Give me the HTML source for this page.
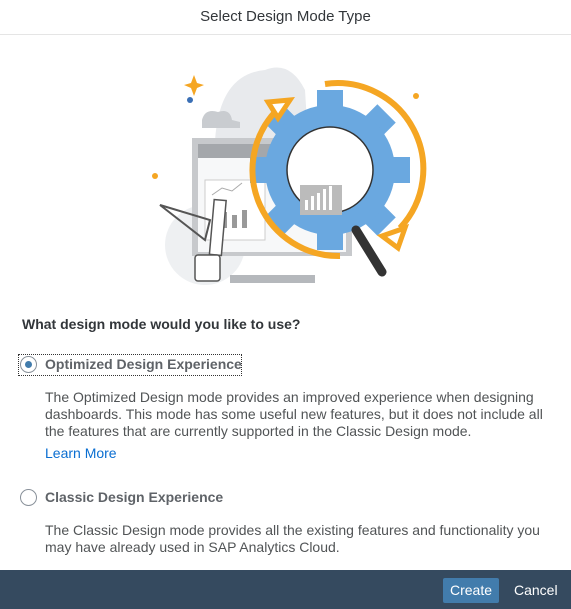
<!DOCTYPE html>
<html><head><style>
body{margin:0;width:571px;height:609px;background:#fff;font-family:"Liberation Sans",sans-serif;position:relative;overflow:hidden;color:#32363a}
.t{position:absolute;white-space:nowrap}
.hdr{position:absolute;left:0;top:0;width:571px;height:34px;border-bottom:1px solid #e5e5e5;text-align:center;line-height:33px;font-size:15px;color:#32363a}
.q{left:22px;top:316px;font-size:14px;font-weight:bold}
.lab{font-size:14px;font-weight:bold;color:#5f6368}
.d{font-size:14px;color:#515456;line-height:17px;white-space:normal;width:510px}
.radio{position:absolute;width:15px;height:15px;border:1px solid #89919a;border-radius:50%;background:#fff}
.foot{position:absolute;left:0;top:570px;width:571px;height:39px;background:#354a5f}
.btn{position:absolute;top:8px;height:25px;line-height:25px;font-size:14px;color:#fff;padding:0 7px}
</style></head><body>
<div class="hdr">Select Design Mode Type</div>
<svg style="position:absolute;left:130px;top:50px" width="310" height="240" viewBox="0 0 310 240">
<path d="M85 120 Q80 25 135 20 Q160 10 175 40 L180 120 Z" fill="#e8eaed"/>
<circle cx="75" cy="195" r="40" fill="#eef0f2"/>
<path d="M72 70 Q75 58 88 62 Q100 58 102 70 L110 72 L110 78 L72 78 Z" fill="#c9ccd0"/>
<rect x="62" y="88" width="160" height="118" fill="#c7c9cc"/>
<rect x="68" y="94" width="148" height="108" fill="#f7f8f9"/>
<rect x="68" y="94" width="148" height="14" fill="#a4a7ab"/>
<rect x="75" y="130" width="60" height="60" fill="#fff" stroke="#ccc"/>
<polyline points="82,145 92,138 102,141 112,133" fill="none" stroke="#aaa"/>
<rect x="92" y="162" width="5" height="16" fill="#999"/><rect x="102" y="165" width="5" height="13" fill="#999"/><rect x="112" y="160" width="5" height="18" fill="#999"/>
<rect x="100" y="225" width="85" height="8" fill="#b5b8bc"/>
<g transform="translate(200 120)" fill="#6aa8e0" stroke="#333" stroke-width="1.5">
<g stroke="none">
<rect x="-13" y="-80" width="26" height="20"/>
<rect x="-13" y="-80" width="26" height="20" transform="rotate(45)"/>
<rect x="-13" y="-80" width="26" height="20" transform="rotate(90)"/>
<rect x="-13" y="-80" width="26" height="20" transform="rotate(135)"/>
<rect x="-13" y="-80" width="26" height="20" transform="rotate(180)"/>
<rect x="-13" y="-80" width="26" height="20" transform="rotate(225)"/>
<rect x="-13" y="-80" width="26" height="20" transform="rotate(270)"/>
<rect x="-13" y="-80" width="26" height="20" transform="rotate(315)"/>
</g>
<circle r="65" stroke="none"/>
<circle r="43" fill="#fff"/>
</g>
<rect x="170" y="135" width="42" height="30" fill="#bbb"/>
<rect x="175" y="150" width="3" height="10" fill="#fff"/><rect x="181" y="146" width="3" height="14" fill="#fff"/><rect x="187" y="143" width="3" height="17" fill="#fff"/><rect x="193" y="139" width="3" height="21" fill="#fff"/><rect x="199" y="136" width="3" height="24" fill="#fff"/>
<path d="M195 34 A86 86 0 0 1 270 178" fill="none" stroke="#f5a623" stroke-width="6"/>
<path d="M145 62 A86 86 0 0 0 210 206" fill="none" stroke="#f5a623" stroke-width="6"/>
<path d="M138 52 L160 50 L148 68 Z" fill="#fff" stroke="#f5a623" stroke-width="5"/>
<path d="M252 186 L275 178 L268 198 Z" fill="#fff" stroke="#f5a623" stroke-width="5"/>
<path d="M226 180 L252 222" stroke="#333" stroke-width="9" stroke-linecap="round"/>
<path d="M64 25 L67 33 L74 35 L67 38 L64 46 L61 38 L54 35 L61 33 Z" fill="#f5a623"/>
<path d="M30 155 L80 170 L75 190 Z" fill="none" stroke="#555" stroke-width="2"/>
<rect x="82" y="150" width="12" height="55" fill="#fff" stroke="#555" stroke-width="1.5" transform="rotate(5 88 175)"/>
<rect x="65" y="205" width="25" height="26" rx="3" fill="#fff" stroke="#555" stroke-width="1.5"/>
<circle cx="60" cy="50" r="3" fill="#3a6fb5"/><circle cx="25" cy="126" r="3" fill="#f5a623"/><circle cx="286" cy="46" r="3" fill="#f5a623"/>
</svg>
<div class="t q">What design mode would you like to use?</div>
<div style="position:absolute;left:18px;top:354px;width:222px;height:20px;border:1px dotted #333"></div>
<div class="radio" style="left:20px;top:356px"></div>
<div style="position:absolute;left:25px;top:361px;width:7px;height:7px;border-radius:50%;background:#427cac"></div>
<div class="t lab" style="left:45px;top:356px">Optimized Design Experience</div>
<div class="t d" style="left:45px;top:389px">The Optimized Design mode provides an improved experience when designing dashboards. This mode has some useful new features, but it does not include all the features that are currently supported in the Classic Design mode.</div>
<div class="t" style="left:45px;top:445px;font-size:14px;color:#0a6ed1">Learn More</div>
<div class="radio" style="left:20px;top:489px"></div>
<div class="t lab" style="left:45px;top:489px">Classic Design Experience</div>
<div class="t d" style="left:45px;top:522px">The Classic Design mode provides all the existing features and functionality you may have already used in SAP Analytics Cloud.</div>
<div class="foot">
<div class="btn" style="left:443px;background:#427cac;border-radius:2px">Create</div>
<div class="btn" style="left:507px">Cancel</div>
</div>
</body></html>
